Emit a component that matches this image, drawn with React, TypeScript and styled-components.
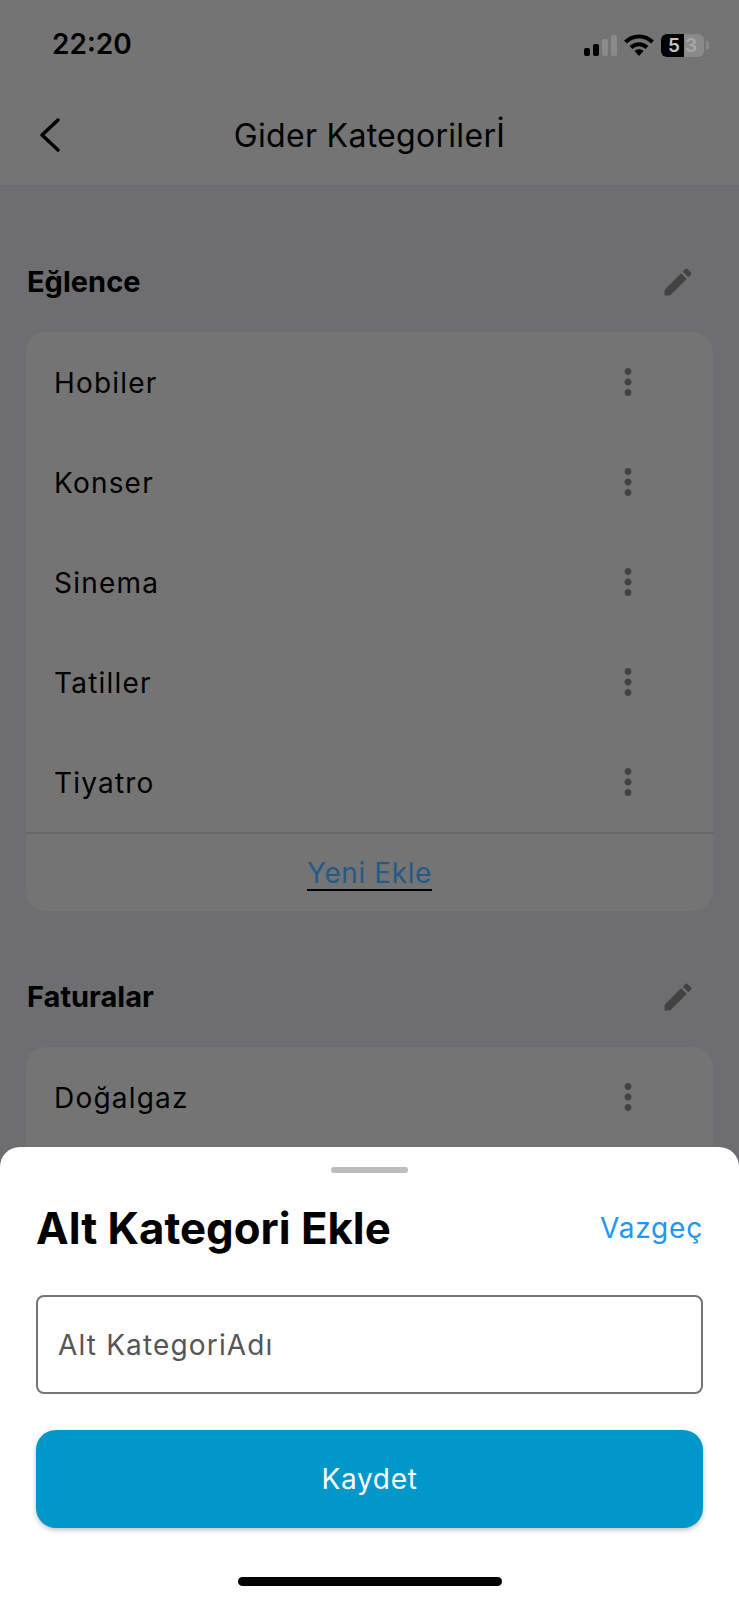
import React from 'react';
import styled, { createGlobalStyle } from 'styled-components';
import { MdEdit, MdMoreVert } from 'react-icons/md';

const GlobalStyle = createGlobalStyle`
  html, body {
    margin: 0;
    padding: 0;
    background: #6e6e70;
  }
  * {
    box-sizing: border-box;
  }
`;

const Page = styled.div`
  position: relative;
  width: 739px;
  height: 1600px;
  overflow: hidden;
  background: #6e6e70;
  font-family: Inter, "Noto Sans", sans-serif;
  color: #000;
`;

const Header = styled.header`
  height: 185px;
  background: #747474;
  display: flex;
  flex-direction: column;
`;

const StatusBar = styled.div`
  height: 90px;
  padding: 0 35px 0 52px;
  display: flex;
  align-items: center;
  justify-content: space-between;
`;

const Time = styled.span`
  font-size: 28px;
  font-weight: 600;
  padding-bottom: 2px;
`;

const StatusIcons = styled.div`
  display: flex;
  align-items: center;
  gap: 7px;
`;

const Signal = styled.div`
  display: flex;
  align-items: flex-end;
  gap: 3px;
  height: 22px;
`;

const SignalBar = styled.span<{ $h: number; $off?: boolean }>`
  width: 6px;
  height: ${p => p.$h}px;
  border-radius: 2px;
  background: ${p => (p.$off ? '#8b8b8b' : '#000')};
`;

const Battery = styled.div`
  position: relative;
  width: 43px;
  height: 23px;
  border-radius: 6px;
  background: linear-gradient(90deg, #000 53%, #8a8a8a 53%);
  display: flex;
  align-items: center;
  justify-content: center;
  gap: 5px;
  font-size: 19px;
  font-weight: 600;

  &::after {
    content: '';
    position: absolute;
    right: -5px;
    top: 7px;
    width: 3px;
    height: 9px;
    border-radius: 0 3px 3px 0;
    background: #8a8a8a;
  }
`;

const Digit = styled.span<{ $c: string }>`
  color: ${p => p.$c};
`;

const NavBar = styled.div`
  flex: 1;
  position: relative;
  display: flex;
  align-items: center;
  justify-content: center;
  padding-bottom: 5px;
`;

const BackButton = styled.svg`
  position: absolute;
  left: 38px;
  top: 27px;
  width: 24px;
  height: 36px;
`;

const NavTitle = styled.h1`
  margin: 0;
  font-size: 32px;
  font-weight: 400;
  letter-spacing: 0.3px;
`;

const Content = styled.main`
  padding: 47px 26px 0;
  display: flex;
  flex-direction: column;
  gap: 36px;
`;

const SectionHead = styled.div`
  height: 100px;
  padding: 0 17px 0 1px;
  display: flex;
  align-items: center;
  justify-content: space-between;
  color: #424242;
`;

const SectionTitle = styled.h2`
  margin: 0 0 2px;
  font-size: 29px;
  font-weight: 700;
  color: #000;
`;

const Card = styled.div<{ $minHeight?: number }>`
  background: #747474;
  border-radius: 20px;
  min-height: ${p => p.$minHeight ?? 0}px;
`;

const Row = styled.div`
  height: 100px;
  padding: 0 64px 0 28px;
  display: flex;
  align-items: center;
  justify-content: space-between;
  font-size: 28px;
  letter-spacing: 1.2px;
  color: #424242;
`;

const RowLabel = styled.span`
  color: #000;
  padding-top: 2px;
`;

const CardFooter = styled.div`
  height: 79px;
  border-top: 2px solid #666;
  display: flex;
  align-items: center;
  justify-content: center;
`;

const AddLink = styled.a`
  font-size: 28px;
  letter-spacing: 0.6px;
  line-height: 32px;
  padding-top: 3px;
  color: #245a85;
  border-bottom: 2px solid #000;
`;

const Sheet = styled.section`
  position: absolute;
  left: 0;
  right: 0;
  bottom: 0;
  height: 453px;
  padding: 20px 36px 0;
  background: #fff;
  border-radius: 20px 20px 0 0;
  display: flex;
  flex-direction: column;
`;

const Handle = styled.div`
  align-self: center;
  width: 77px;
  height: 6px;
  border-radius: 3px;
  background: #bdbdbd;
`;

const SheetHead = styled.div`
  height: 72px;
  margin-top: 19px;
  margin-bottom: 2px;
  display: flex;
  align-items: center;
  justify-content: space-between;
`;

const SheetTitle = styled.h2`
  margin: 0;
  font-size: 43.75px;
  font-weight: 700;
`;

const Cancel = styled.a`
  font-size: 28px;
  letter-spacing: 0.8px;
  color: #2196f3;
`;

const NameInput = styled.input`
  height: 99px;
  margin-top: 29px;
  padding: 0 20px;
  width: 100%;
  border: 2px solid #757575;
  border-radius: 8px;
  background: #fff;
  font-family: inherit;
  font-size: 28px;
  letter-spacing: 1.15px;

  &::placeholder {
    color: #555;
    opacity: 1;
  }
`;

const SaveButton = styled.button`
  height: 98px;
  margin-top: 36px;
  width: 100%;
  border: 0;
  border-radius: 20px;
  background: #0097cb;
  box-shadow: 0 2px 5px rgba(0, 0, 0, 0.25);
  color: #fff;
  font-family: inherit;
  font-size: 28px;
  letter-spacing: 0.7px;
`;

const HomeIndicator = styled.div`
  align-self: center;
  width: 264px;
  height: 9px;
  margin-top: 49px;
  border-radius: 5px;
  background: #000;
`;

const sections = [
  { title: 'Eğlence', items: ['Hobiler', 'Konser', 'Sinema', 'Tatiller', 'Tiyatro'], footer: true },
  { title: 'Faturalar', items: ['Doğalgaz'], footer: false },
];

export default function App() {
  return (
    <Page>
      <GlobalStyle />
      <Header>
        <StatusBar>
          <Time>22:20</Time>
          <StatusIcons>
            <Signal>
              <SignalBar $h={8} />
              <SignalBar $h={12} />
              <SignalBar $h={17} $off />
              <SignalBar $h={21} $off />
            </Signal>
            <svg width="30" height="22" viewBox="0 0 30 22">
              <path d="M1.5 8 C9 0.5 21 0.5 28.5 8" fill="none" stroke="#000" strokeWidth="4" />
              <path d="M7 13.5 C11.5 9 18.5 9 23 13.5" fill="none" stroke="#000" strokeWidth="4" />
              <path d="M10.5 17 C13 14.5 17 14.5 19.5 17 L15 22 Z" fill="#000" />
            </svg>
            <Battery>
              <Digit $c="#c4c4c4">5</Digit>
              <Digit $c="#a8a8a8">3</Digit>
            </Battery>
          </StatusIcons>
        </StatusBar>
        <NavBar>
          <BackButton viewBox="0 0 24 36">
            <path d="M20 3 L4 18 L20 33" fill="none" stroke="#000" strokeWidth="3.5" strokeLinecap="round" strokeLinejoin="round" />
          </BackButton>
          <NavTitle>Gider Kategorilerİ</NavTitle>
        </NavBar>
      </Header>
      <Content>
        {sections.map(section => (
          <div key={section.title}>
            <SectionHead>
              <SectionTitle>{section.title}</SectionTitle>
              <MdEdit size={36} />
            </SectionHead>
            <Card $minHeight={section.footer ? 0 : 300}>
              {section.items.map(item => (
                <Row key={item}>
                  <RowLabel>{item}</RowLabel>
                  <MdMoreVert size={42} />
                </Row>
              ))}
              {section.footer && (
                <CardFooter>
                  <AddLink>Yeni Ekle</AddLink>
                </CardFooter>
              )}
            </Card>
          </div>
        ))}
      </Content>
      <Sheet>
        <Handle />
        <SheetHead>
          <SheetTitle>Alt Kategori Ekle</SheetTitle>
          <Cancel>Vazgeç</Cancel>
        </SheetHead>
        <NameInput placeholder="Alt KategoriAdı" />
        <SaveButton>Kaydet</SaveButton>
        <HomeIndicator />
      </Sheet>
    </Page>
  );
}
